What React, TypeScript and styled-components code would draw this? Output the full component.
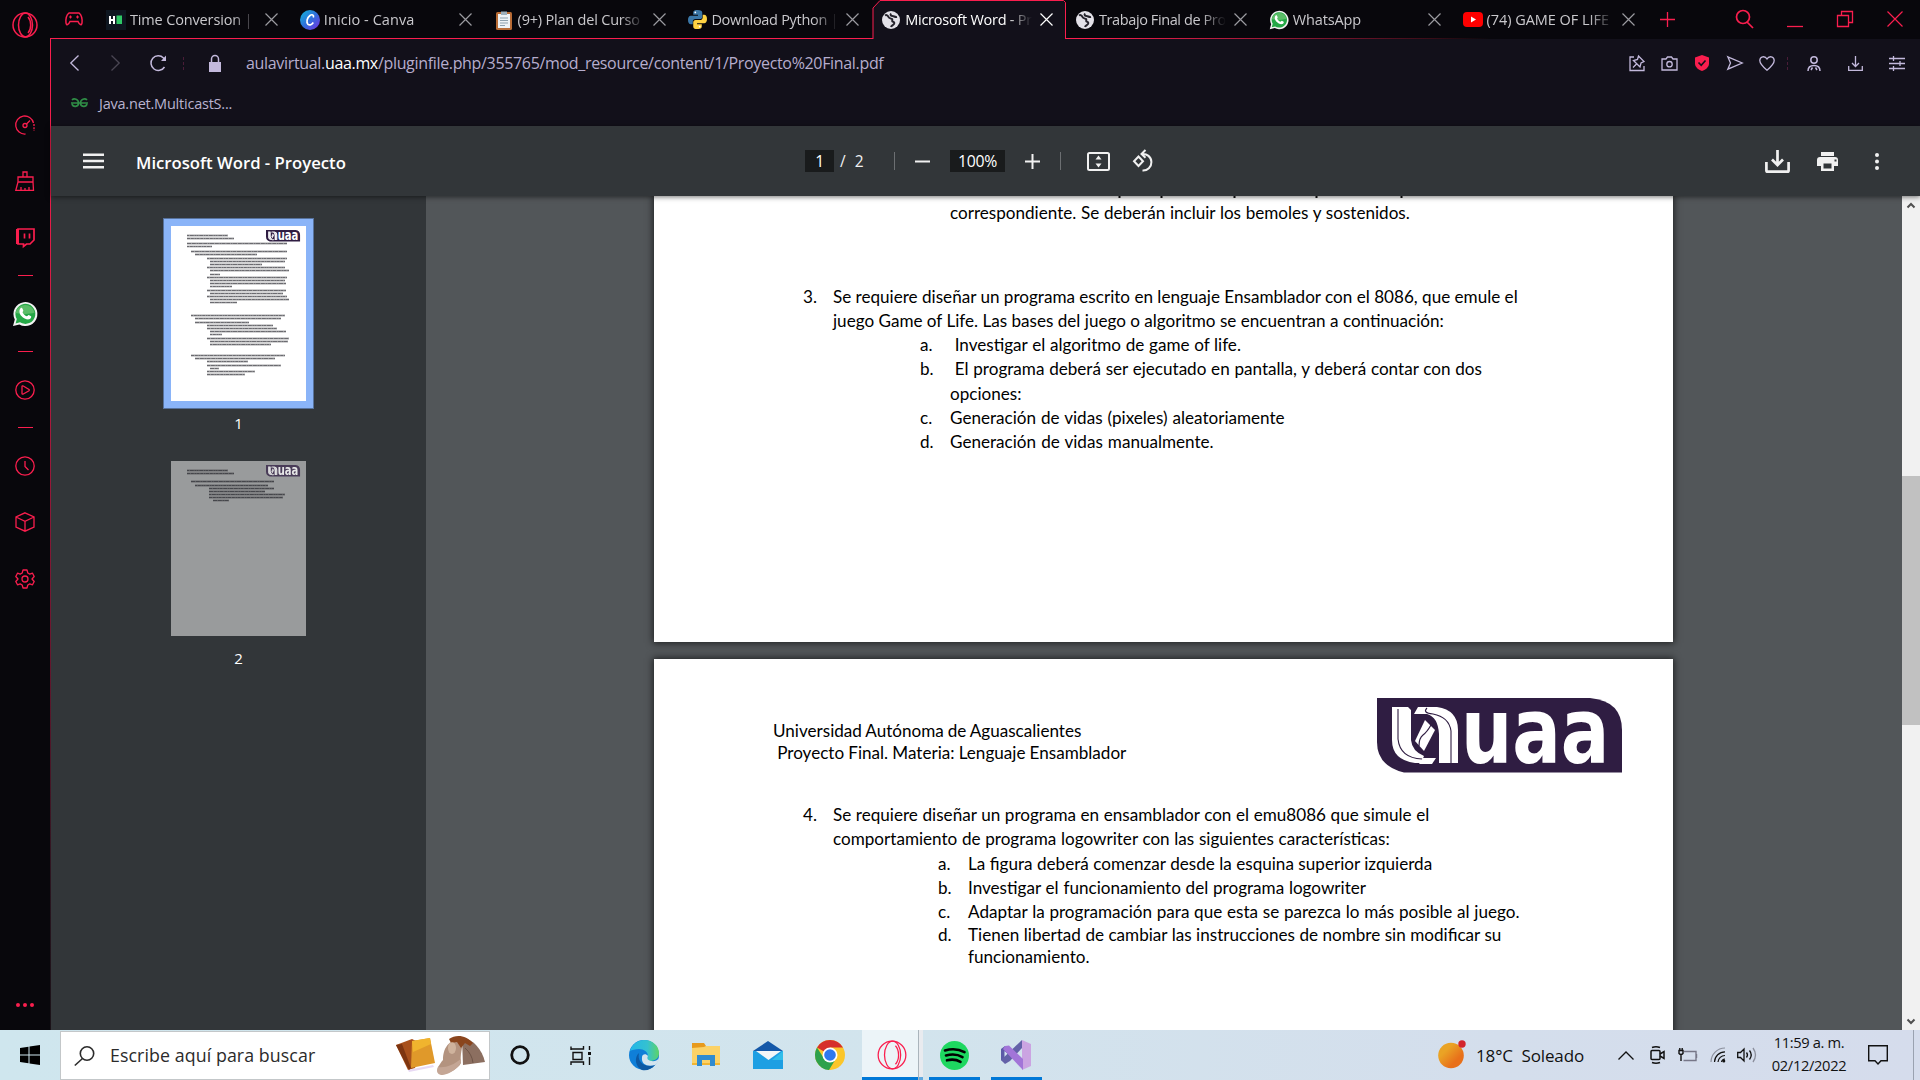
import React from "react";
import styled, { createGlobalStyle } from "styled-components";

const RED = "#fa1e4e";
const LILAC = "#c3b9dc";

const Global = createGlobalStyle`
  * { box-sizing: border-box; }
  body { margin: 0; background: #08070c; }
  svg { display: block; flex: none; overflow: visible; }
`;

const Screen = styled.div`
  width: 1920px; height: 1080px; overflow: hidden;
  display: grid; grid-template: 1030px 50px / 1fr;
  font-family: "Open Sans", "Noto Sans", sans-serif;
`;
const Browser = styled.div`display: grid; grid-template-columns: 50px 1fr; min-height: 0; background: #08070c;`;

/* Side bar */
const Side = styled.nav`display: flex; flex-direction: column; align-items: center; height: 1030px; background: #08070c; color: ${RED};`;
const SideItem = styled.div<{ $h: number; $mt?: number; $end?: boolean }>`
  height: ${p => p.$h}px; width: 49px; display: flex; align-items: center; justify-content: center;
  margin-top: ${p => (p.$end ? "auto" : `${p.$mt ?? 0}px`)};
`;
const SideRule = styled.div<{ $mt?: number }>`width: 15px; height: 1px; background: ${RED}; margin-top: ${p => p.$mt ?? 0}px;`;
const Main = styled.div`
  display: flex; flex-direction: column; height: 1030px; min-width: 0;
`;
const Work = styled.div`
  flex: 1; min-height: 0; display: flex; flex-direction: column; border-left: 1px solid;
  border-image: linear-gradient(${RED} 0, #e21c47 200px, #8c1836 480px, #2a1520 850px, #1a1218) 1;
`;

/* Tabs */
const TabBar = styled.header`
  height: 39px; display: flex; padding-left: 48px; position: relative;
  background: linear-gradient(90deg, ${RED} 0, ${RED} 1040px, #8c1733 1250px, #3a0d18 1380px, #08070c 1440px) bottom / 100% 1px no-repeat #08070c;
`;
const Pad = styled.div`position: absolute; left: 15px; top: 12px; color: ${RED};`;
const TabBox = styled.div<{ $active?: boolean }>`
  width: 193.8px; height: 39px; flex: none; display: flex; align-items: center; padding: 0 8px; position: relative;
  color: ${p => (p.$active ? "#fff" : "#c9c8cc")};
`;
const TabShape = styled.svg`position: absolute; left: 0; top: 0;`;
const TabIcon = styled.div`width: 20px; height: 20px; display: flex; align-items: center; justify-content: center; position: relative;`;
const TabClose = styled.div<{ $active?: boolean }>`position: relative; color: ${p => (p.$active ? "#fff" : "#9b9aa0")};`;
const TabText = styled.div<{ $s?: number }>`
  width: 127px; margin-left: 4px; font-size: 14.5px; line-height: 20px; letter-spacing: ${p => p.$s ?? -0.45}px;
  white-space: pre; overflow: hidden; position: relative; margin-right: 8px;
  mask-image: linear-gradient(90deg, #000 102px, transparent 127px);
`;
const WindowTools = styled.div`display: flex; align-items: center; margin-left: 12px; height: 38px; color: ${RED};`;
const Gap = styled.div<{ $w: number }>`width: ${p => p.$w}px; flex: none;`;

/* Address and bookmarks */
const Address = styled.div`height: 48px; display: flex; align-items: center; background: #12101a; color: ${LILAC};`;
const Forward = styled.div`color: #4a4653;`;
const Url = styled.div`
  width: 660px; font-size: 16px; letter-spacing: -0.33px; white-space: nowrap; line-height: 24px; color: #b6adcd;
  b { font-weight: 400; color: #fff; }
`;
const Bookmarks = styled.div`
  height: 39px; display: flex; align-items: center; padding: 0 0 7px 20px; background: #12101a; color: #b9b3d0;
  font-size: 14.5px; letter-spacing: -0.22px; gap: 11px;
`;
const Dots = styled.div`width: 1px; height: 13px; background: repeating-linear-gradient(#4a1d38 0 3px, transparent 3px 5px);`;

/* PDF toolbar */
const PdfBar = styled.div`
  height: 70px; flex: none; display: flex; align-items: center; background: #323639; color: #f1f1f1;
  box-shadow: 0 1px 5px rgba(0, 0, 0, 0.55); position: relative; z-index: 1; font-size: 15.5px;
`;
const PdfTitle = styled.div`width: 669px; margin-left: 32px; padding-top: 3px; font-weight: 600; font-size: 16.7px; letter-spacing: 0; color: #fff;`;
const Field = styled.div<{ $w: number }>`
  width: ${p => p.$w}px; height: 22px; line-height: 22px; text-align: center; background: #191b1c; letter-spacing: -0.3px; font-size: 15.8px; color: #fff;
`;
const Slash = styled.div`width: 60px; padding-left: 6px; white-space: pre; word-spacing: 5px;`;
const Divider = styled.div`width: 1px; height: 18px; background: #6c6f72;`;

/* Viewer */
const Viewer = styled.div`flex: 1; min-height: 0; display: grid; grid-template-columns: 375px 1fr 18px; overflow: hidden;`;
const Thumbs = styled.aside`background: #323639; display: flex; flex-direction: column; align-items: center; padding-top: 22px; color: #fff; font-size: 14px;`;
const Thumb = styled.div<{ $on?: boolean }>`
  width: 151px; height: 191px; padding: 8px; background: ${p => (p.$on ? "#8ab4f8" : "transparent")};
  outline: ${p => (p.$on ? "1px solid #57729c" : "none")}; outline-offset: -1px;
`;
const ThumbPage = styled.div<{ $on?: boolean }>`width: 135px; height: 175px; background: ${p => (p.$on ? "#fff" : "#999b9c")};`;
const ThumbLabel = styled.div`height: 44px; padding-top: 5px; line-height: 19px; font-size: 15px;`;
const Canvas = styled.main`background: #525659; display: flex; flex-direction: column; gap: 17px; padding-left: 228px; overflow: hidden;`;
const Page = styled.article<{ $h: number; $top: number }>`
  width: 1019px; height: ${p => p.$h}px; flex: none; padding-top: ${p => p.$top}px; background: #fff; color: #000; position: relative;
  box-shadow: 0 0 7px 1px rgba(0, 0, 0, 0.65);
  font-family: Lato, "Open Sans", sans-serif; font-size: 17.1px;
`;
const Line = styled.div<{ $x: number; $mt?: number; $ws?: number }>`
  display: flex; height: 24px; line-height: 24px; white-space: pre; padding-left: ${p => p.$x}px; margin-top: ${p => p.$mt ?? 0}px;
  word-spacing: ${p => p.$ws ?? 0}px;
`;
const Mark = styled.span`width: 30px; flex: none;`;
const Logo = styled.svg`position: absolute; left: 723px; top: 39px;`;
const Specks = styled.svg`position: absolute; left: 0; top: 0;`;
const Scroll = styled.div`background: #f1f1f1; display: flex; flex-direction: column; align-items: center; padding: 7px 0 6px;`;
const ScrollThumb = styled.div`width: 18px; height: 249px; margin: 268px 0 auto; background: #c1c1c1;`;

/* Taskbar */
const Taskbar = styled.footer`
  display: flex; align-items: center; background: linear-gradient(90deg, #cfe6ee 0, #d2e4ed 900px, #d4deec 1500px, #d5dcec); color: #111;
`;
const Start = styled.div`width: 60px; height: 50px; padding: 15px 0 0 20px;`;
const Search = styled.div`
  width: 430px; height: 49px; margin-top: 1px; display: flex; align-items: center; background: #fff; border: 1px solid #c3c7c9; padding-left: 13px; color: #2b2b2b;
`;
const SearchText = styled.div`width: 300px; padding: 0 0 1px 15px; font-size: 17.8px; letter-spacing: 0.08px; white-space: nowrap;`;
const TaskButton = styled.div<{ $run?: boolean; $on?: boolean; $w?: number }>`
  width: ${p => p.$w ?? 62}px; height: 50px; display: flex; align-items: center; justify-content: center; flex: none; color: ${p => (p.$on ? RED : "#111")};
  background: ${p => (p.$on ? "linear-gradient(#0078d7, #0078d7) 0 47px / 57px 3px no-repeat, linear-gradient(#ecf4f8, #ecf4f8) 0 0 / 56px 100% no-repeat"
    : p.$run ? "linear-gradient(#0078d7, #0078d7) 6px 47px / 51px 3px no-repeat" : "none")};
`;
const ActiveGroup = styled.div`width: 62px; height: 50px; display: flex; flex: none; padding-left: 1px;`;
const Split = styled.div`width: 5px; height: 50px; background: linear-gradient(#e9ebef 47px, #5fa8df 47px); border-left: 1px solid #aab4bc;`;
const Tray = styled.div`display: flex; align-items: center; margin-left: 391px; height: 50px;`;
const Weather = styled.div`width: 152px; padding-left: 10px; font-size: 17px; letter-spacing: -0.13px; white-space: pre;`;
const Clock = styled.div`width: 104px; text-align: center; font-size: 14.7px; line-height: 23px; letter-spacing: -0.35px; margin-top: -2px;`;
const ShowDesktop = styled.div`width: 1px; height: 50px; background: #9aa2b0;`;

type SvgProps = { w: number; h?: number; vb?: string; sw?: number; children: React.ReactNode };
const Ico = ({ w, h = w, vb, sw = 1.3, children }: SvgProps) => (
  <svg width={w} height={h} viewBox={vb ?? `0 0 ${w} ${h}`} fill="none" stroke="currentColor" strokeWidth={sw}>{children}</svg>
);
const Cross = ({ s = 13 }: { s?: number }) => (
  <Ico w={s} sw={1.2}><path d={`M.5 .5L${s - 0.5} ${s - 0.5}M${s - 0.5} .5L.5 ${s - 0.5}`} /></Ico>
);
const OperaRing = ({ s, sw = 1.3 }: { s: number; sw?: number }) => (
  <Ico w={s} vb="0 0 26 26" sw={sw}>
    <circle cx="13" cy="13" r="12" /><ellipse cx="13.5" cy="13" rx="7" ry="12" /><path d="M16 5c3.600 4 3.600 12 0 16" />
  </Ico>
);
const WhatsApp = ({ s }: { s: number }) => (
  <svg width={s} height={s} viewBox="0 0 26 26">
    <path d="M1 25l1.8-6.4A12 12 0 1 1 7.4 23.400z" fill="#f3f3f3" />
    <path d="M3.6 22.500l1.200-4.500A10 10 0 1 1 8 21.300z" fill="#25a847" /><path d="M3.500 12a9.800 9.800 0 0 1 19.200-.5c-6 2-12 1.500-19.200.5z" fill="#5bbd68" />
    <path d="M8.600 7.200c.6-.6 1.500-.5 1.800.2l.9 2c.2.500-.9 1.500-.7 2 1 1.900 2.300 3.100 4.200 3.900.5.200 1.400-1.500 2-1.200l2.200 1.100c.7.400-.2 2.600-1.800 3.100-2.200.6-5.500-.8-7.800-3.300C7.400 12.800 6.600 9.200 8.600 7.200z" fill="#fff" />
  </svg>
);
const Globe = () => (
  <svg width="18" height="18" viewBox="0 0 18 18"><circle cx="9" cy="9" r="9" fill="#e3e1e8" />
    <path d="M3 4.500c1.500-1 3 0 3.500 1.500S9 7.500 10 8s-.5 2 .5 2.500 2.500 1 1.500 2.500-2.500 1.500-3 3M9 2.500c-1 1.500 0 2.500 1.500 2.500S13 6.500 15 6" stroke="#25232c" strokeWidth="2" fill="none" /></svg>
);
const Python = () => (
  <svg width="19" height="19" viewBox="0 0 20 20">
    <path d="M10 0C6 0 5.500 1.500 5.500 3v2H10.500v1H3C1 6 0 8 0 10.500S1 15 3 15h2v-2.500C5 10.500 6 9.500 8 9.500h4.500c1.500 0 2.500-1 2.500-2.500V3C15 1 13.500 0 10 0z" fill="#3b77a8" />
    <path d="M10 20c4 0 4.500-1.500 4.500-3v-2H9.500v-1H17c2 0 3-2 3-4.500S19 5 17 5h-1.500v2.500c0 2-1.500 3-3 3H8c-1.500 0-2.500 1-2.500 2.500v4c0 2 1 3 4.500 3z" fill="#ffd343" />
    <circle cx="7.700" cy="2.600" r=".9" fill="#fff" /><circle cx="12.300" cy="17.400" r=".9" fill="#fff" />
  </svg>
);

const tabIcons: Record<string, React.ReactNode> = {
  hr: <svg width="20" height="20"><path fill="#0e1620" d="M0 0h20v20H0z" /><path d="M4 6v8M8 6v8M4 10h4" stroke="#fff" strokeWidth="2" /><path fill="#2ec866" d="M10.500 5.500H16v8.500h-5.500z" /></svg>,
  canva: <svg width="20" height="20"><defs><linearGradient id="cv" x1="0" y1="0" x2="1" y2="1"><stop stopColor="#12b8d8" /><stop offset=".5" stopColor="#2f6fdc" /><stop offset="1" stopColor="#7a2fe0" /></linearGradient></defs><circle cx="10" cy="10" r="10" fill="url(#cv)" /><path d="M13.300 7.500c1-2.500-1.300-3.500-3.300-2C7 7.700 6 12.500 8 14.300c1.700 1.400 4 .2 5.300-1.800" fill="none" stroke="#fff" strokeWidth="1.700" /></svg>,
  clip: <svg width="16" height="20"><rect y="2" width="16" height="18" rx="1.500" fill="#b86b35" /><path fill="#eef2f5" d="M2 4h12v14H2z" /><path d="M5 1.500h6V5H5z" fill="#9fb0bb" /><path d="M4 8h8M4 10.500h8M4 13h8M4 15.500h5" stroke="#8da0ad" /></svg>,
  py: <Python />, globe: <Globe />, wa: <WhatsApp s={20} />,
  yt: <svg width="20" height="15"><rect width="20" height="15" rx="4" fill="#f00" /><path d="M8 4.500l5 3-5 3z" fill="#fff" /></svg>,
};
const tabs: [string, string, number?][] = [
  ["hr", "Time Conversion | H", -0.15], ["canva", "Inicio - Canva", 0.08], ["clip", "(9+) Plan del Curso", -0.2], ["py", "Download Python | ", -0.3],
  ["globe", "Microsoft Word - Pr", -0.25], ["globe", "Trabajo Final de Pro", -0.4], ["wa", "WhatsApp", -0.15], ["yt", "(74) GAME OF LIFE ", -0.05],
];

const Emblem = () => (
  <>
    <path d="M0 0H213Q245 3 245 32V74.500H27Q0 68 0 44z" fill="#2f1d42" />
    <path d="M15 9h16l3 3v30q1 11 13 16l-3 7h-6Q15 62 15 42z" fill="#fff" />
    <path d="M41 9h19q21 3 21 23v33H62V36Q61 19 50 16H37z" fill="#fff" />
    <path d="M21 11v30q2 19 24 20M50 10q-5 5 6 6 16 3 18 17v32" fill="none" stroke="#2f1d42" strokeWidth="1.100" />
    <path d="M48 22l10 10-11 21-9-10z" fill="#fff" /><path d="M54 27q-4 7-8 10t-4 11" fill="none" stroke="#2f1d42" strokeWidth="1.200" />
    <path d="M46 60h13l-4 6H42z" fill="#fff" />
    <text transform="translate(84 65) scale(.8 1)" fontFamily="DejaVu Sans" fontWeight="700" fontSize="90" fill="#fff">uaa</text>
  </>
);

/* Text rows of a page miniature: [x, y, width] */
const mini1: [number, number, number][] = [
  [16, 9, 41], [16, 12, 47], [16, 17, 100], [16, 20, 25], [20, 25, 96], [24, 28, 62], [36, 32, 80], [39, 35, 75], [39, 38, 52], [36, 41, 78], [39, 44, 79], [39, 48, 10],
  [36, 51, 80], [39, 54, 75], [39, 57, 76], [39, 60, 22], [36, 64, 79], [39, 67, 73], [36, 70, 80], [39, 73, 79], [39, 76, 27],
  [20, 89, 94], [24, 92, 86], [24, 96, 54], [36, 99, 66], [36, 102, 70], [39, 105, 76], [39, 108, 12], [36, 112, 82], [39, 115, 78], [39, 118, 61],
  [20, 129, 94], [24, 132, 80], [36, 135, 41], [36, 139, 74], [39, 142, 9], [36, 145, 48], [36, 148, 38]];
const mini2: [number, number, number][] = [[16, 9, 41], [16, 12, 47], [20, 20, 83], [24, 24, 73], [38, 27, 65], [38, 30, 56], [38, 33, 76], [38, 36, 74], [42, 39, 16]];
const Mini = ({ rows, dim }: { rows: [number, number, number][]; dim?: boolean }) => (
  <svg width="135" height="175">
    {rows.map(([x, y, w], i) => (
      <g key={i} stroke="#15151c" fill="none">
        <path d={`M${x} ${y + 0.5}h${w}`} strokeOpacity=".38" strokeWidth="1.800" />
        <path d={`M${x} ${y + 0.5}h${w}`} strokeOpacity=".4" strokeWidth="1" strokeDasharray={`${2 + (i % 3)} .8 ${4 - (i % 2)} .7 1.500 .5`} />
      </g>
    ))}
    <g transform="translate(95 4) scale(.139 .155)" opacity={dim ? 0.75 : 1}><Emblem /></g>
  </svg>
);

export default function App() {
  return (
    <Screen>
      <Global />
      <Browser>
        <Side>
          <SideItem $h={50}><OperaRing s={26} sw={1.5} /></SideItem>
          <SideItem $h={57} $mt={46}><Ico w={20}><path d="M10.500 19A9 9 0 1 1 18.500 8" /><path d="M19 9v7" strokeDasharray="2 1.200" /><circle cx="10" cy="10.500" r="2" /><path d="M11.500 9l3.500-3.500" /></Ico></SideItem>
          <SideItem $h={56}><Ico w={20}><path d="M8 6V1h4v5M3 6h15v5H3zM3 11L.8 19.300H18.500L18 11M6 19v-3M10 19v-2M14 19v-3" /></Ico></SideItem>
          <SideItem $h={56}><Ico w={19} sw={1.700}><path d="M2 1h16v11l-4 4h-3.500l-3 2.500V16H2z" /><path d="M1.500 1v15" strokeWidth="3" /><path d="M8.500 5.500v5M13.500 5.500v5" /></Ico></SideItem>
          <SideRule $mt={10} />
          <SideItem $h={75}><WhatsApp s={26} /></SideItem><SideRule />
          <SideItem $h={75}><Ico w={20}><circle cx="10" cy="10" r="9.200" /><path d="M7 6.500v7q.3 1 1.300.5L14 10.700q.6-.6 0-1.200L8.300 6Q7.300 5.600 7 6.500z" /></Ico></SideItem><SideRule />
          <SideItem $h={75}><Ico w={20}><circle cx="10" cy="10" r="9.200" /><path d="M10 5v5.500l3.500 3.500" /></Ico></SideItem>
          <SideItem $h={38}><Ico w={20}><path d="M10 .8L19 5v10l-9 4.200L1 15V5zM1 5l9 4.300L19 5M10 9.300V19" /></Ico></SideItem>
          <SideItem $h={75}><Ico w={20}><circle cx="10" cy="10" r="3" /><path d="M8 1h4l.8 3 2 1.100 2.700-.9 1.700 3.300L17 10l2.200 2.500-1.700 3.300-2.700-.9-2 1.100-.8 3H8l-.8-3-2-1.100-2.700.9L.8 12.500 3 10 .8 7.500l1.700-3.300 2.700.9 2-1.100z" strokeLinejoin="round" /></Ico></SideItem>
          <SideItem $h={50} $end><svg width="20" height="4" fill={RED}><circle cx="3" cy="2" r="2" /><circle cx="10" cy="2" r="2" /><circle cx="17" cy="2" r="2" /></svg></SideItem>
        </Side>
        <Main>
          <TabBar>
            <Pad><Ico w={18} h={14} sw={1.500}><path d="M4 1h10c2.500 2 3.400 6 3 10-.3 2.500-2.500 2.200-4-1.500H5C3.500 13.200 1.300 13.500 1 11c-.4-4 .5-8 3-10z" /><path d="M5.500 3.500v3M4 5h3M12.500 3.500v3M11 5h3" strokeWidth="1.100" /></Ico></Pad>
            {tabs.map(([icon, text, s], i) => (
              <TabBox key={i} $active={i === 4}>
                {i === 4 && <TabShape width="194" height="39"><path d="M0 39V8L7 .5H190.500L192.500 2.500V39" fill="#12101a" stroke={RED} /></TabShape>}
                <TabIcon>{tabIcons[icon]}</TabIcon>
                <TabText $s={s}>{text}</TabText>
                <TabClose $active={i === 4}><Cross /></TabClose>
              </TabBox>
            ))}
            <WindowTools>
              <Ico w={15}><path d="M7.500 0v15M0 7.500h15" /></Ico><Gap $w={60} />
              <Ico w={19} sw={1.700}><circle cx="8" cy="7" r="6.500" /><path d="M12 12l6 6" /></Ico><Gap $w={33} />
              <Ico w={16} h={16}><path d="M0 15.500h16" /></Ico><Gap $w={34} />
              <Ico w={16} h={16}><path d="M.5 4.500h11v11H.5zM4.500 4V.500h11v11H12" /></Ico><Gap $w={34} />
              <Cross s={16} />
            </WindowTools>
          </TabBar>
          <Work>
            <Address>
              <Gap $w={19} /><Ico w={9} h={16}><path d="M8.500 .5L.8 8l7.700 7.500" /></Ico><Gap $w={32} />
              <Forward><Ico w={9} h={16}><path d="M.5 .5L8.200 8 .5 15.500" /></Ico></Forward><Gap $w={30} />
              <Ico w={17} h={16} sw={1.500}><path d="M14.500 12A7.300 7.300 0 1 1 13.500 3L15.500 5.500" /><path d="M16 .5v5.500h-5z" fill="currentColor" stroke="none" /></Ico><Gap $w={16} /><Dots /><Gap $w={25} />
              <Ico w={12} h={17} sw={1.500}><path d="M2.500 7V4a3.500 3.500 0 0 1 7 0v3" /><path d="M0 7h12v10H0z" fill="currentColor" stroke="none" /></Ico><Gap $w={25} />
              <Url>aulavirtual.<b>uaa.mx</b>/pluginfile.php/355765/mod_resource/content/1/Proyecto%20Final.pdf</Url>
              <Gap $w={723} />
              <Ico w={16}><path d="M5 2H1v13.500h14V11M9.500 1L15 6.500 12 8l-1 4-6.500-6.500L8.500 4.500zM7.500 9L4 12.500" /></Ico><Gap $w={16} />
              <Ico w={17} h={15}><path d="M1 3h4l1.500-2h4L12 3h4v11H1z" /><circle cx="8.500" cy="8.200" r="2.700" /></Ico><Gap $w={17} />
              <Ico w={14} h={16}><path d="M7 0l7 2.500v6c0 4-4 6.500-7 7.500-3-1-7-3.500-7-7.500v-6z" fill={RED} stroke="none" /><path d="M3.500 7.500l2.700 2.800L10.500 5.500" stroke="#12101a" strokeWidth="1.600" /></Ico><Gap $w={18} />
              <Ico w={16} h={14}><path d="M.8.800L15.200 7 .8 13.200 3.500 7z" /></Ico><Gap $w={16} />
              <Ico w={16} h={15}><path d="M8 14.200C3 10 .8 7.500.8 4.500.8.300 6-.5 8 3c2-3.500 7.200-2.700 7.200 1.500 0 3-2.200 5.500-7.200 9.700z" /></Ico><Gap $w={12} /><Dots /><Gap $w={19} />
              <Ico w={14} h={15} sw={1.500}><circle cx="7" cy="4" r="3.200" /><path d="M1 15c0-4 2-5.500 6-5.500s6 1.500 6 5.500M4 14l1.500-2.500M10 14l-1.500-2.500" /></Ico><Gap $w={27} />
              <Ico w={15} h={15}><path d="M.7 10v4.300h13.600V10M7.500 0v10.500M4 7l3.500 3.500L11 7" /></Ico><Gap $w={26} />
              <Ico w={16} h={15}><path d="M0 2.500h16M0 7.500h16M0 12.500h16M4.500 0v5M11 5v5M4.500 10v5" /></Ico>
            </Address>
            <Bookmarks>
              <svg width="17" height="10" fill="none" stroke="#2f8d46" strokeWidth="1.700"><path d="M0 5h17M1 2C3 0 7.500 1 7.500 5S2 9.500 1 6M16 2c-2-2-6.500-1-6.500 3s5.500 4.500 6.500 1" /></svg>
              <span>Java.net.MulticastS...</span>
            </Bookmarks>
            <PdfBar>
              <Gap $w={32} /><Ico w={21} h={16} sw={2.600}><path d="M0 1.800h21M0 8h21M0 14.200h21" /></Ico>
              <PdfTitle>Microsoft Word - Proyecto</PdfTitle>
              <Field $w={29}>1</Field><Slash>/ 2</Slash>
              <Divider /><Gap $w={20} /><Ico w={15} sw={2}><path d="M0 7.500h15" /></Ico><Gap $w={20} />
              <Field $w={55}>100%</Field><Gap $w={20} /><Ico w={15} sw={2}><path d="M0 7.500h15M7.500 0v15" /></Ico><Gap $w={20} /><Divider /><Gap $w={26} />
              <Ico w={23} h={19} sw={2}><rect x="1" y="1" width="21" height="17" rx="1.500" /><path d="M11.500 3.500l3 4h-6zM11.500 15.500l3-4h-6z" fill="currentColor" stroke="none" /></Ico><Gap $w={22} />
              <Ico w={22} h={22} sw={2}><path d="M6.500 6.500L11 11.200 6.500 16 2 11.200zM10 4a8.300 8.300 0 1 1 .5 16.500M13.500 0L9.500 4l4 3.800" /></Ico>
              <Gap $w={611} />
              <Ico w={25} h={23} sw={2.700}><path d="M1.400 12v8.500q0 1.200 1.200 1.200h19.800q1.200 0 1.200-1.200V12M12.500 0v14M7 9.500l5.500 5.500L18 9.500" /></Ico><Gap $w={27} />
              <svg width="21" height="19" fill="#f1f1f1"><path d="M4 0h13v4H4zM3 5h15a3 3 0 0 1 3 3v6h-4v5H4v-5H0V8a3 3 0 0 1 3-3zm3.500 6.500v5h8v-5zM17.500 7.500v2h2v-2z" fillRule="evenodd" /></svg><Gap $w={37} />
              <svg width="4" height="17" fill="#f1f1f1"><circle cx="2" cy="2" r="2" /><circle cx="2" cy="8.500" r="2" /><circle cx="2" cy="15" r="2" /></svg>
            </PdfBar>
            <Viewer>
              <Thumbs>
                <Thumb $on><ThumbPage $on><Mini rows={mini1} /></ThumbPage></Thumb><ThumbLabel>1</ThumbLabel>
                <Thumb><ThumbPage><Mini rows={mini2} dim /></ThumbPage></Thumb><ThumbLabel>2</ThumbLabel>
              </Thumbs>
              <Canvas>
                <Page $h={446} $top={5}>
                  <Specks width="1019" height="3"><path d="M465.500 0v2M507.500 0v2M580.500 0v2M662.500 0v2M747.500 0v2" stroke="#111" strokeWidth="2" /></Specks>
                  <Line $x={296} $ws={0.3}>correspondiente. Se deberán incluir los bemoles y sostenidos.</Line>
                  <Line $x={149} $mt={60}><Mark>3.</Mark>Se requiere diseñar un programa escrito en lenguaje Ensamblador con el 8086, que emule el</Line>
                  <Line $x={179}>juego Game of Life. Las bases del juego o algoritmo se encuentran a continuación:</Line>
                  <Line $x={266} $ws={0.3}><Mark>a.</Mark> Investigar el algoritmo de game of life.</Line>
                  <Line $x={266} $ws={0.35}><Mark>b.</Mark> El programa deberá ser ejecutado en pantalla, y deberá contar con dos</Line>
                  <Line $x={296} $mt={1}>opciones:</Line>
                  <Line $x={266} $ws={0.6}><Mark>c.</Mark>Generación de vidas (pixeles) aleatoriamente</Line>
                  <Line $x={266} $ws={0.7}><Mark>d.</Mark>Generación de vidas manualmente.</Line>
                </Page>
                <Page $h={500} $top={60}>
                  <Logo width="245" height="75"><Emblem /></Logo>
                  <Line $x={119} $ws={-0.4}>Universidad Autónoma de Aguascalientes</Line>
                  <Line $x={119} $mt={-2} $ws={-0.2}> Proyecto Final. Materia: Lenguaje Ensamblador</Line>
                  <Line $x={149} $mt={38} $ws={0.25}><Mark>4.</Mark>Se requiere diseñar un programa en ensamblador con el emu8086 que simule el</Line>
                  <Line $x={179} $ws={0.3}>comportamiento de programa logowriter con las siguientes características:</Line>
                  <Line $x={284} $mt={1} $ws={0.1}><Mark>a.</Mark>La figura deberá comenzar desde la esquina superior izquierda</Line>
                  <Line $x={284} $ws={0.4}><Mark>b.</Mark>Investigar el funcionamiento del programa logowriter</Line>
                  <Line $x={284} $ws={0.35}><Mark>c.</Mark>Adaptar la programación para que esta se parezca lo más posible al juego.</Line>
                  <Line $x={284} $mt={-1} $ws={0.1}><Mark>d.</Mark>Tienen libertad de cambiar las instrucciones de nombre sin modificar su</Line>
                  <Line $x={314} $mt={-2}>funcionamiento.</Line>
                </Page>
              </Canvas>
              <Scroll>
                <svg width="8" height="5" fill="none" stroke="#505050" strokeWidth="2"><path d="M.5 4.500L4 1l3.500 3.500" /></svg>
                <ScrollThumb />
                <svg width="8" height="5" fill="none" stroke="#505050" strokeWidth="2"><path d="M.5.500L4 4 7.500.500" /></svg>
              </Scroll>
            </Viewer>
          </Work>
        </Main>
      </Browser>
      <Taskbar>
        <Start><svg width="20" height="20"><path d="M0 3l8.500-1.300v7.800H0zM9.500 1.500L20 0v9.500H9.500zM0 10.500h8.500v7.800L0 17zM9.500 10.500H20V20L9.500 18.500z" /></svg></Start>
        <Search>
          <Ico w={21} h={20} sw={1.600}><circle cx="13" cy="7.500" r="6.700" /><path d="M8.500 12.500L.8 19.500" /></Ico>
          <SearchText>Escribe aquí para buscar</SearchText>
          <svg width="92" height="40" viewBox="0 0 92 40">
            <path d="M1 9L17 3l10 5-7 24-7 2z" fill="#a8501b" /><path d="M17 5l18-3 5 25-24 5z" fill="#e0992a" /><path d="M17 5l18-3 1 6-18 8z" fill="#f0b42e" /><path d="M13 34l25-5 1 2-25 5z" fill="#e8daf4" /><path d="M1 9l13 25 2-2L7 8z" fill="#7d3510" />
            <path d="M67 2c12 1 20 12 23 24l-22 3z" fill="#8c6f60" /><path d="M48 24c0-16 10-22 21-21-2 9-4 16-3 24-3 6-12 10-18 11-5 1-6-3-5-7 2-3 3-5 5-7z" fill="#b3937f" /><path d="M43 31c8 1 15-2 23-8 1 8-12 16-20 16-4-1-5-4-3-8z" fill="#c4a695" /><path d="M54 3c7-5 17-4 24 4l-3 3-5-3-4 5-4-6-6 1z" fill="#8a451d" /><path d="M70 12q7 6 8 15" stroke="#6d5346" fill="none" /><ellipse cx="57" cy="12" rx="4" ry="6" fill="#dcc0aa" opacity=".7" />
          </svg>
        </Search>
        <TaskButton $w={60}><Ico w={20} sw={2.800}><circle cx="10" cy="10" r="8.300" /></Ico></TaskButton>
        <TaskButton><Ico w={20} h={19} sw={1.400}><path d="M0 4V.500M0 3h12.500V0M2 6.500h9v7H2zM0 19v-3h12.500v3M18.500 0v4M18.500 11v8" /><path d="M17 6h3v3h-3z" fill="currentColor" stroke="none" /></Ico></TaskButton>
        <Gap $w={1} />
        <TaskButton><svg width="30" height="30" viewBox="0 0 30 30"><defs><linearGradient id="eg" x1="0" x2="1"><stop stopColor="#22b7e8" /><stop offset=".6" stopColor="#35c1d0" /><stop offset="1" stopColor="#5ed465" /></linearGradient></defs>
          <circle cx="15" cy="15" r="15" fill="#0f7fd8" /><path d="M1 11C3 4 9 0 15 0c9 0 15 6 15 13 0 6-5 8-9 8-4-1-3-3-2-5 0-4-4-7-9-7-4 0-7 1-9 2z" fill="url(#eg)" /><path d="M10 13c-2 8 4 15 16 12-3 4-8 6-13 5C6 27 5 17 10 13z" fill="#0c59a4" /><path d="M19 16c-1 2-1 4 3 5 3 .5 6 0 8-3-1 4-2 6-4 7-7 2-14 0-13-8 0-3 4-4 6-1z" fill="#d3e4ee" /></svg></TaskButton>
        <TaskButton><svg width="28" height="24"><path d="M0 0h12l2 3H28v19H0z" fill="#e79a1d" /><path d="M0 5l12-1 2-1h14v19H0z" fill="#fbd267" /><path d="M0 20h28v2H0z" fill="#f2b632" /><path d="M5 12h18v11h-5v-6h-8v6H5z" fill="#2f8bd0" /></svg></TaskButton>
        <TaskButton><svg width="30" height="29"><path d="M0 10L15 0l15 10z" fill="#1458a8" /><path d="M0 10h30v18H0z" fill="#1d9fe3" /><path d="M30 10v9L19 19z" fill="#30bdea" /><path d="M3 10h25L15.500 19z" fill="#f2f6f8" /></svg></TaskButton>
        <TaskButton><svg width="30" height="30" viewBox="0 0 30 30"><circle cx="15" cy="15" r="15" fill="#fbc62a" /><path d="M15 15L2 7.500A15 15 0 0 1 28 7.500H15z" fill="#d6302a" /><path d="M2 7.500A15 15 0 0 0 14 30l7-11.500-12 0z" fill="#2da14c" /><circle cx="15" cy="15" r="7.500" fill="#fff" /><circle cx="15" cy="15" r="5.800" fill="#2f78ee" /></svg></TaskButton>
        <ActiveGroup><TaskButton $on $w={56}><Gap $w={4} /><OperaRing s={30} sw={1.100} /></TaskButton><Split /></ActiveGroup>
        <TaskButton $run><svg width="29" height="29"><circle cx="14.500" cy="14.500" r="14.500" fill="#1ed760" /><path d="M5 9.500c7-2 14-1.300 19.500 1.700M6 14.500c6-1.700 12-1 16.500 1.600M7 19.300c5-1.300 9.500-.8 13.500 1.500" stroke="#000" strokeWidth="2.600" fill="none" strokeLinecap="round" /></svg></TaskButton>
        <TaskButton $run><svg width="30" height="30"><path d="M0 9l4-3 10 8-10 9-4-3z" fill="#5c5aa8" /><path d="M3.500 11v7l4-3.500z" fill="#d3e4ee" /><path d="M21 0l9 4v22l-9 4z" fill="#cba4e2" /><path d="M21 0v8L9 21l-5 3-4-4z" fill="#6361a8" /><path d="M4 6l4-.5L22 19v11L2 9z" fill="#a275d8" /></svg></TaskButton>
        <Tray>
          <svg width="28" height="28"><defs><linearGradient id="sn" x1="0" y1="0" x2="1" y2="1"><stop offset=".3" stopColor="#eaa325" /><stop offset=".7" stopColor="#e8701a" /></linearGradient></defs><circle cx="13" cy="14.500" r="12.800" fill="url(#sn)" /><circle cx="24" cy="3" r="3.700" fill="#d3242c" /></svg>
          <Weather>18°C  Soleado</Weather>
          <Ico w={16} h={9}><path d="M.5 8.500L8 1l7.500 7.500" /></Ico><Gap $w={16} />
          <Ico w={15} h={18} sw={1.500}><rect x="1" y="4.500" width="9" height="9" rx="1" /><path d="M10 8l4-2.500v7L10 10M2 1.500q4-1.500 8 0M2 16.500q4 1.500 8 0" /></Ico><Gap $w={13} />
          <Ico w={20} h={14} sw={1.400}><path d="M6 3.500h12v9H5.500M18.500 6v4" stroke="#777788" /><path d="M1 2.500h4v3q-2 2-4 0zM1.800 0v2.500M4.200 0v2.500M3 6.500V13" /></Ico><Gap $w={12} />
          <Ico w={16} h={16} sw={1.200}><path d="M1 15A14 14 0 0 1 15 1" stroke="#8b8f9c" /><path d="M4.500 15A10.500 10.500 0 0 1 15 4.800M8 15a7 7 0 0 1 7-6.500M11.500 15A3.700 3.700 0 0 1 15 12" /><circle cx="13.800" cy="14" r="1.500" fill="currentColor" stroke="none" /></Ico><Gap $w={11} />
          <Ico w={20} h={16} sw={1.300}><path d="M.7 5.500H3.500L7 2v12l-3.500-3.500H.7zM9.500 5.500q2 2.500 0 5M12.500 3.500q3.500 4.500 0 9" /><path d="M16 1q5 7 0 14" stroke="#8b8f9c" /></Ico>
          <Clock>11:59 a. m.<br />02/12/2022</Clock>
          <Gap $w={7} /><Ico w={20} h={20} sw={1.400}><path d="M.7.700h18.600v15H13l-3 3.300-3-3.300H.7z" /></Ico><Gap $w={25} />
          <ShowDesktop />
        </Tray>
      </Taskbar>
    </Screen>
  );
}
